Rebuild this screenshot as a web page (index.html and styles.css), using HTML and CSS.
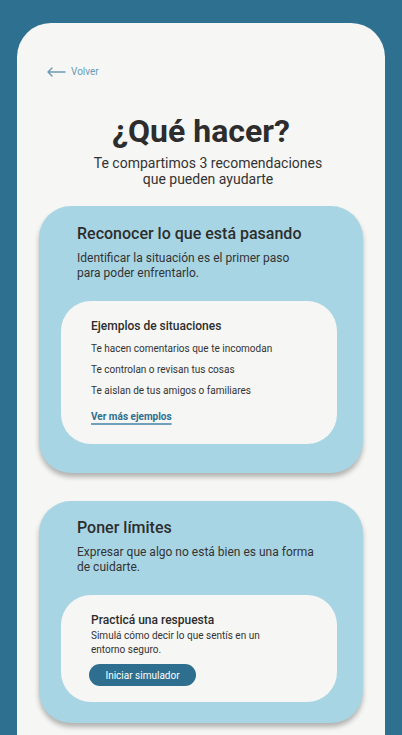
FILE: index.html
```html
<!DOCTYPE html>
<html lang="es">
<head>
<meta charset="utf-8">
<link rel="stylesheet" href="styles.css">
</head>
<body>
<div class="screen">
  <a class="back" href="#">
    <svg class="back-icon" width="19" height="10" viewBox="0 0 19 10"><path d="M1 5H18M1 5L5 1M1 5L5 9" fill="none" stroke="#6b9ab6" stroke-width="1.4" stroke-linecap="round" stroke-linejoin="round"/></svg>
    <span>Volver</span>
  </a>
  <h1 class="title">¿Qué hacer?</h1>
  <p class="subtitle">Te compartimos 3 recomendaciones<br>que pueden ayudarte</p>

  <section class="card card-one">
    <h2 class="card-title">Reconocer lo que está pasando</h2>
    <p class="card-desc">Identificar la situación es el primer paso<br>para poder enfrentarlo.</p>
    <div class="inner inner-one">
      <h3 class="inner-title">Ejemplos de situaciones</h3>
      <ul class="examples">
        <li>Te hacen comentarios que te incomodan</li>
        <li>Te controlan o revisan tus cosas</li>
        <li>Te aislan de tus amigos o familiares</li>
      </ul>
      <a class="more" href="#">Ver más ejemplos</a>
    </div>
  </section>

  <section class="card card-two">
    <h2 class="card-title">Poner límites</h2>
    <p class="card-desc">Expresar que algo no está bien es una forma<br>de cuidarte.</p>
    <div class="inner inner-two">
      <h3 class="inner-title">Practicá una respuesta</h3>
      <p class="inner-desc">Simulá cómo decir lo que sentís en un<br>entorno seguro.</p>
      <button class="btn">Iniciar simulador</button>
    </div>
  </section>
</div>
</body>
</html>
```
FILE: styles.css
```css
* { box-sizing: border-box; }
html, body {
  margin: 0;
  padding: 0;
  background: #2e7090;
  font-family: Roboto, "Noto Sans", sans-serif;
  color: #2f2f2f;
}
body { height: 735px; overflow: hidden; }
.screen {
  margin: 23px 17px 0;
  background: #f6f6f4;
  border-radius: 34px 34px 0 0;
  min-height: 712px;
  padding: 42px 22px 20px 22px;
  display: flex;
  flex-direction: column;
}
.back {
  display: flex;
  align-items: center;
  gap: 5px;
  margin-left: 8px;
  height: 14px;
  text-decoration: none;
  color: #6b9ab6;
  font-size: 10px;
  line-height: 14px;
}
.back-icon { display: block; }
.title {
  margin: 33px 0 0;
  font-size: 32px;
  line-height: 38px;
  font-weight: 700;
  text-align: center;
  color: #2d2d2d;
}
.subtitle {
  margin: 5px 0 0;
  padding-left: 14px;
  font-size: 14px;
  line-height: 16px;
  text-align: center;
  color: #333;
}
.card {
  background: #a8d5e4;
  border-radius: 32px;
  box-shadow: 0 4px 5px rgba(0,0,0,0.28);
  padding: 18px 26px 29px 22px;
}
.card-one { margin-top: 19px; }
.card-two { margin-top: 28px; padding-top: 17px; padding-bottom: 21px; }
.card-title {
  margin: 0 0 0 16px;
  font-size: 16px;
  line-height: 20px;
  font-weight: 500;
  color: #2d2d2d;
}
.card-desc {
  margin: 7px 0 0 16px;
  font-size: 12px;
  line-height: 15px;
  color: #333;
}
.inner {
  margin-top: 20px;
  background: #f6f6f4;
  border-radius: 30px;
  padding: 17px 20px 20px 30px;
}
.inner-two { margin-top: 20px; padding-bottom: 16px; }
.inner-title {
  margin: 0;
  font-size: 12px;
  line-height: 16px;
  font-weight: 500;
  color: #2d2d2d;
}
.examples {
  list-style: none;
  margin: 8px 0 0;
  padding: 0;
  display: flex;
  flex-direction: column;
  gap: 7px;
}
.examples li {
  font-size: 10px;
  line-height: 14px;
  color: #333;
}
.more {
  display: inline-block;
  margin-top: 12px;
  font-size: 10px;
  line-height: 14px;
  font-weight: 700;
  color: #2e6e8e;
  text-decoration: underline;
  text-decoration-color: #6f9fba;
  text-decoration-thickness: 2px;
  text-underline-offset: 3px;
}
.inner-desc {
  margin: 1px 0 0;
  font-size: 10px;
  line-height: 14px;
  color: #333;
}
.btn {
  display: block;
  margin: 7px 0 0 -2px;
  width: 107px;
  height: 22px;
  border: none;
  border-radius: 11px;
  background: #2e6e8e;
  color: #fff;
  font-family: Roboto, "Noto Sans", sans-serif;
  font-size: 10px;
  padding: 0;
}
```
